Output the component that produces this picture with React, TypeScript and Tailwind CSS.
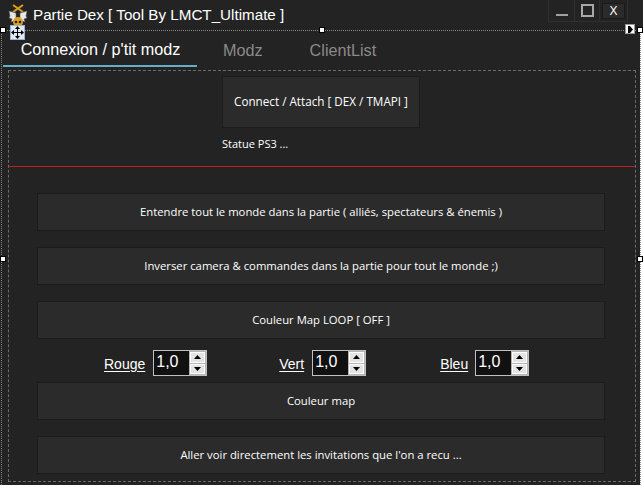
import React from 'react';

const sans = "font-['Open_Sans',sans-serif]";
const arial = "font-['Liberation_Sans',Arial,sans-serif]";

const Handle = ({ className }: { className: string }) => (
  <div className={`absolute w-[6px] h-[6px] bg-white border border-black ${className}`} />
);

const ActionButton = ({ label, className }: { label: string; className: string }) => (
  <button className={`flex h-[38px] w-[568px] shrink-0 items-center justify-center border border-[#1b1b1b] bg-[#2b2b2b] text-[11.3px] text-white ${sans} ${className}`}>
    {label}
  </button>
);

const Spinner = ({ label, labelClass, boxClass }: { label: string; labelClass: string; boxClass: string }) => (
  <>
    <span className={`mt-[2px] text-[14px] leading-none text-white underline underline-offset-2 ${arial} ${labelClass}`}>{label}</span>
    <div className={`flex h-[26px] w-[54px] shrink-0 border border-[#c0c0c0] bg-[#111111] ${boxClass}`}>
      <span className={`flex-1 pl-[2px] text-[16px] leading-[21px] text-white ${arial}`}>1,0</span>
      <div className="flex w-[17px] flex-col gap-[1px] bg-[#b4b4b4] p-[1px]">
        <div className="flex flex-1 items-center justify-center border border-white bg-[#e4e4e4]">
          <svg width="7" height="4" viewBox="0 0 7 4"><path d="M3.5 0 7 4H0z" fill="#000" /></svg>
        </div>
        <div className="flex flex-1 items-center justify-center border border-white bg-[#e4e4e4]">
          <svg width="7" height="4" viewBox="0 0 7 4"><path d="M0 0h7L3.5 4z" fill="#000" /></svg>
        </div>
      </div>
    </div>
  </>
);

const SkullIcon = () => (
  <svg width="20" height="26" viewBox="0 0 20 26" className="shrink-0">
    <path d="M5 1l10 7M15 1L5 8" stroke="#d9a21b" strokeWidth="2" />
    <path d="M8 9 1 7l1 5-1 2 3 1-1 3 5-2zM12 9l7-2-1 5 1 2-3 1 1 3-5-2z" fill="#e8e8e8" stroke="#555" strokeWidth="0.6" />
    <circle cx="10" cy="18" r="5" fill="#e0a01a" />
    <rect x="7.5" y="21" width="5" height="4" fill="#c98a12" />
    <circle cx="8" cy="18" r="1.3" fill="#222" />
    <circle cx="12" cy="18" r="1.3" fill="#222" />
  </svg>
);

export default function App() {
  return (
    <div className="relative flex h-[485px] w-[643px] flex-col overflow-hidden bg-[#232323]">
      {/* title bar */}
      <div className="mr-[3px] flex h-[31px] shrink-0 items-start border-b border-dotted border-[#8a8a8a] pl-[8px]">
        <div className="mt-[4px]"><SkullIcon /></div>
        <span className={`ml-[5px] mt-[6px] text-[15.2px] leading-[18px] text-white ${arial}`}>Partie Dex [ Tool By LMCT_Ultimate ]</span>
        <div className="ml-auto mr-[12px] flex h-[22px] border-b border-x border-[#2f2f2f]">
          <div className="flex w-[26px] items-end justify-center border-r border-[#2f2f2f] pb-[5px]">
            <div className="h-[2px] w-[12px] bg-[#a0a0a0]" />
          </div>
          <div className="flex w-[25px] items-center justify-center border-r border-[#2f2f2f]">
            <div className="h-[13px] w-[13px] border-2 border-[#a8a8a8]" />
          </div>
          <div className="m-[2px] mt-[3px] flex w-[23px] items-center justify-center border border-[#191919] bg-[#2b2b2b]">
            <span className={`text-[12px] leading-none text-white ${arial}`}>X</span>
          </div>
        </div>
      </div>

      {/* tabs */}
      <div className={`flex h-[36px] shrink-0 pl-[3px] text-[16.2px] ${arial}`}>
        <div className="flex w-[194px] items-center justify-center border-b-2 border-[#64afc8] pl-[1px] pt-[2px] text-white">Connexion / p'tit modz</div>
        <div className="ml-[26px] flex items-center pt-[2px] text-[#8a8a8a]">Modz</div>
        <div className="ml-[47px] flex items-center pt-[2px] text-[#8a8a8a]">ClientList</div>
      </div>

      {/* panel */}
      <div className="ml-[8px] mr-[7px] mt-[3px] flex h-[412px] flex-col border border-dashed border-[#6a6a6a]">
        <button className={`ml-[213px] mt-[5px] flex h-[52px] w-[198px] shrink-0 items-center justify-center border border-[#1b1b1b] bg-[#2b2b2b] text-[11.7px] text-white ${sans}`}>
          Connect / Attach [ DEX / TMAPI ]
        </button>
        <span className={`ml-[213px] mt-[8px] text-[11px] leading-[16px] text-white ${sans}`}>Statue PS3 ...</span>
        <div className="mt-[14px] h-px w-full shrink-0 bg-[#c01f1f]" />
        <ActionButton className="ml-[28px] mt-[26px]" label="Entendre tout le monde dans la partie ( alliés, spectateurs & énemis )" />
        <ActionButton className="ml-[28px] mt-[16px]" label="Inverser camera & commandes dans la partie pour tout le monde ;)" />
        <ActionButton className="ml-[28px] mt-[16px]" label="Couleur Map LOOP [ OFF ]" />
        <div className="mt-[11px] flex h-[26px] shrink-0 items-center">
          <Spinner label="Rouge" labelClass="ml-[95px]" boxClass="ml-[8px]" />
          <Spinner label="Vert" labelClass="ml-[72px]" boxClass="ml-[8px]" />
          <Spinner label="Bleu" labelClass="ml-[74px]" boxClass="ml-[7px]" />
        </div>
        <ActionButton className="ml-[28px] mt-[6px]" label="Couleur map" />
        <ActionButton className="ml-[28px] mt-[16px]" label="Aller voir directement les invitations que l'on a recu ..." />
      </div>

      {/* designer selection frame */}
      <div className="absolute bottom-0 left-[1px] top-[31px] border-l border-dotted border-[#8a8a8a]" />
      <div className="absolute bottom-0 right-0 top-[31px] w-[3px] border-l border-dotted border-[#8a8a8a] bg-white" />
      <Handle className="left-0 top-[27px]" />
      <Handle className="left-[319px] top-[27px]" />
      <Handle className="left-[637px] top-[27px]" />
      <Handle className="left-0 top-[256px]" />
      <Handle className="left-[637px] top-[256px]" />
      <div className="absolute left-[10px] top-[25px] flex h-[15px] w-[15px] items-center justify-center border border-[#9db2d0] bg-[#dfe8f5]">
        <svg width="13" height="13" viewBox="0 0 13 13">
          <path d="M6.5 1v11M1 6.5h11" stroke="#000" />
          <path d="M6.5 0 9 3H4zM6.5 13 4 10h5zM0 6.5 3 4v5zM13 6.5 10 9V4z" fill="#000" />
        </svg>
      </div>
      <div className="absolute left-[625px] top-[24px] flex h-[10px] w-[10px] items-center justify-center border border-[#999] bg-white">
        <svg width="5" height="7" viewBox="0 0 5 7"><path d="M0 0h2l3 3.5L2 7H0z" fill="#000" /></svg>
      </div>
    </div>
  );
}
